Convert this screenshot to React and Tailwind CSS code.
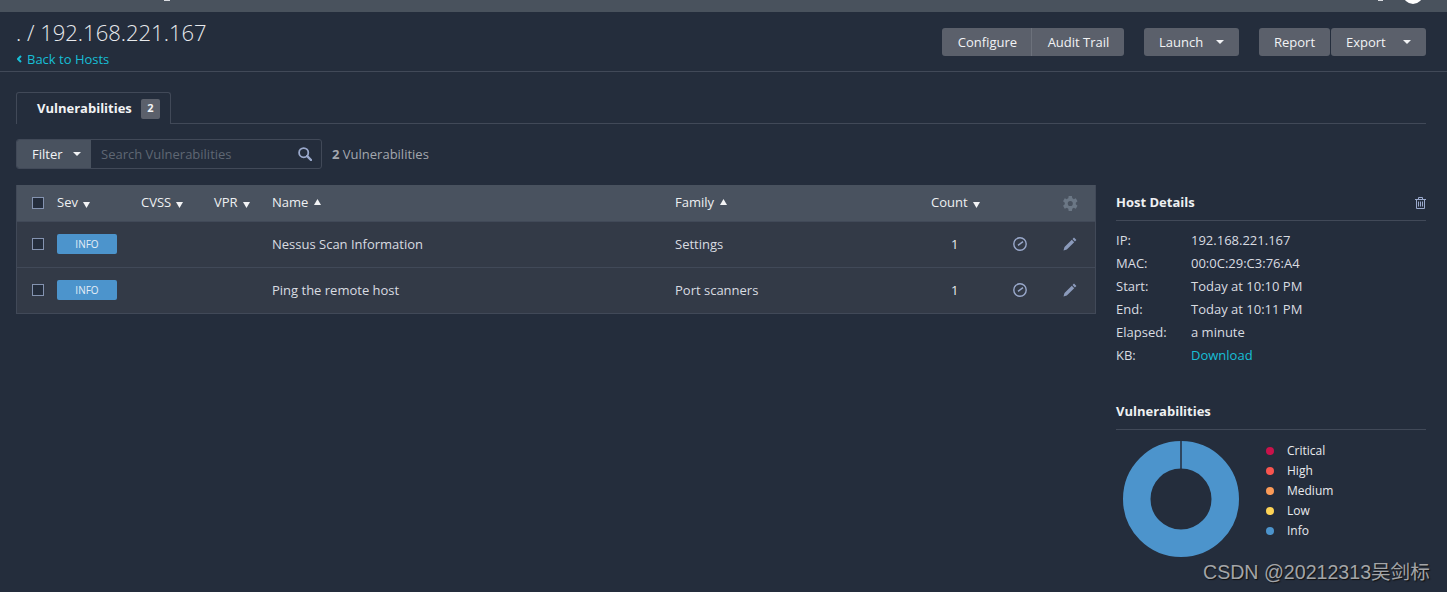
const Caret = ({ className = "" }) => (
  <svg viewBox="0 0 8 4" className={"h-1 w-2 fill-[#f2f3f5] " + className}>
    <path d="M0 0h8L4 4z" />
  </svg>
);

const SortArrow = ({ up }) => (
  <svg
    viewBox="0 0 7 7"
    className={"h-[7px] w-[7px] fill-[#f2f3f5] " + (up ? "ml-[6px] -mt-[2px]" : "ml-[5px] mt-[3px]")}
  >
    <path d={up ? "M3.5 0L7 6H0z" : "M0 1h7L3.5 7z"} />
  </svg>
);

const Check = ({ className = "" }) => (
  <span className={"block h-3 w-3 border border-[#8493b0] bg-[#242d3c] " + className} />
);

const SearchIcon = () => (
  <svg viewBox="0 0 14 14" className="h-[14px] w-[14px] fill-none stroke-[#9aa9cc]">
    <circle cx="5.7" cy="5.7" r="4.6" strokeWidth="1.8" />
    <path d="M9.2 9.2l3.8 3.8" strokeWidth="2.4" strokeLinecap="round" />
  </svg>
);

const Gauge = () => (
  <svg viewBox="0 0 14 14" className="h-[14px] w-[14px] fill-none stroke-[#9aa9cc]">
    <circle cx="7" cy="7" r="6.2" strokeWidth="1.4" />
    <path d="M5 8.4L10 4.6" strokeWidth="1.4" />
  </svg>
);

const Pencil = () => (
  <svg viewBox="0 0 14 14" className="h-[14px] w-[14px] fill-[#8b9abb]">
    <path d="M11 .6l2.4 2.4-1.5 1.5-2.4-2.4zM8.8 2.8l2.4 2.4-7.4 7.2-3.3 1 1-3.3z" />
  </svg>
);

const Gear = () => (
  <svg viewBox="0 0 24 24" className="h-[17px] w-[17px] fill-[#6b7785]">
    <path d="M19.4 13.2c.05-.4.1-.8.1-1.2s-.05-.8-.1-1.2l2.5-2-2.4-4.1-3 1.2a8 8 0 0 0-2-1.2L14 1.5H9.4l-.5 3.2a8 8 0 0 0-2 1.2l-3-1.2-2.4 4.1 2.5 2c-.05.4-.1.8-.1 1.2s.05.8.1 1.2l-2.5 2 2.4 4.1 3-1.2a8 8 0 0 0 2 1.2l.5 3.2H14l.5-3.2a8 8 0 0 0 2-1.2l3 1.2 2.4-4.1zM11.7 15.6a3.6 3.6 0 1 1 0-7.2 3.6 3.6 0 0 1 0 7.2z" />
  </svg>
);

const TrashIcon = () => (
  <svg viewBox="0 0 11 12" className="h-3 w-[11px] fill-none stroke-[#9aa9cc]">
    <path d="M0 2.5h11M3.5 2.5V.5h4v2M1.5 2.5v9h8v-9M3.5 4.5v5M5.5 4.5v5M7.5 4.5v5" strokeWidth="1" />
  </svg>
);

const Btn = ({ children, className = "" }) => (
  <div className={"flex h-7 items-center bg-[#5b606b] pt-[2px] text-[13px] text-[#f2f3f5] " + className}>
    {children}
  </div>
);

const rows = [
  { name: "Nessus Scan Information", family: "Settings" },
  { name: "Ping the remote host", family: "Port scanners" },
];

const details = [
  ["IP:", "192.168.221.167"],
  ["MAC:", "00:0C:29:C3:76:A4"],
  ["Start:", "Today at 10:10 PM"],
  ["End:", "Today at 10:11 PM"],
  ["Elapsed:", "a minute"],
];

const legend = [
  ["Critical", "bg-[#c9124a]"],
  ["High", "bg-[#f9554f]"],
  ["Medium", "bg-[#fb9b58]"],
  ["Low", "bg-[#fdd356]"],
  ["Info", "bg-[#4c94cc]"],
];

export default function App() {
  return (
    <div className="relative h-[592px] w-[1447px] overflow-hidden bg-[#242d3c] font-['Open_Sans',sans-serif] text-[13px] text-[#d9dce1]">
      <div className="relative h-3 bg-[#49525d]">
        <div className="absolute right-[24px] top-[-16px] h-5 w-5 rounded-full bg-white" />
        <div className="absolute left-[164px] top-0 h-[1px] w-[6px] bg-[#d9dce1]" />
        <div className="absolute left-[1378px] top-0 h-[1px] w-[5px] bg-[#d9dce1]" />
      </div>

      <header className="flex h-[60px] items-start justify-between border-b border-[#414958] pl-4 pr-[21px]">
        <div>
          <h1 className="mt-[6px] text-[22px] font-light leading-7 text-[#e8eaed]">. / 192.168.221.167</h1>
          <a className="mt-[4px] flex items-center text-[13px] leading-[18px] text-[#17bfd6]">
            <svg viewBox="0 0 5 8" className="ml-px mr-[5px] h-2 w-[5px] fill-none stroke-[#17bfd6] stroke-2">
              <path d="M4 1L1 4l3 3" />
            </svg>
            Back to Hosts
          </a>
        </div>
        <div className="mt-4 flex">
          <Btn className="w-[90px] justify-center rounded-l-[3px] border-r border-[#6c717b] pl-[2px]">Configure</Btn>
          <Btn className="w-[92px] justify-center rounded-r-[3px] pl-px">Audit Trail</Btn>
          <Btn className="ml-5 w-[95px] gap-[13px] rounded-[3px] pl-[15px]">
            Launch
            <Caret className="mb-[3px]" />
          </Btn>
          <Btn className="ml-5 w-[71px] justify-center rounded-[3px]">Report</Btn>
          <Btn className="ml-px w-[95px] gap-[17px] rounded-[3px] pl-[15px]">
            Export
            <Caret className="mb-[3px]" />
          </Btn>
        </div>
      </header>

      <div className="pl-4 pr-[21px]">
        <div className="mt-5 flex h-8 border-b border-[#414958]">
          <div className="-mb-px flex h-8 w-[155px] items-center rounded-t-[3px] border border-b-0 border-[#414958] bg-[#242d3c] pl-5">
            <span className="font-bold text-[#f2f3f5]">Vulnerabilities</span>
            <span className="ml-[9px] flex h-5 w-[19px] items-center justify-center rounded-[2px] bg-[#5b606b] text-[11px] font-bold text-[#f2f3f5]">
              2
            </span>
          </div>
        </div>

        <div className="mt-[15px] flex items-center">
          <div className="flex h-[30px] w-[306px] overflow-hidden rounded-[3px] border border-[#414958]">
            <div className="flex w-[74px] items-center bg-[#49525f] pl-[15px] pt-[2px] text-[#f2f3f5]">
              Filter
              <Caret className="ml-[10px] mb-[2px]" />
            </div>
            <div className="flex flex-1 items-center justify-between pl-[10px] pr-[9px] pt-[2px] text-[#5f6773]">
              Search Vulnerabilities
              <span className="mb-[2px]"><SearchIcon /></span>
            </div>
          </div>
          <div className="ml-[10px] pt-[2px] text-[#a3a7ae]">
            <span className="font-bold">2</span> Vulnerabilities
          </div>
        </div>

        <div className="mt-[16px] flex items-start">
          <div className="w-[1080px] border border-t-0 border-[#414958] bg-[#333a47]">
            <div className="flex h-[37px] items-center border-b border-[#414958] bg-[#49525f] pl-[15px] text-[#eef0f2]">
              <Check />
              <div className="ml-[13px] flex w-[84px] items-center">Sev<SortArrow /></div>
              <div className="flex w-[73px] items-center">CVSS<SortArrow /></div>
              <div className="flex w-[58px] items-center">VPR<SortArrow /></div>
              <div className="flex w-[403px] items-center">Name<SortArrow up /></div>
              <div className="flex w-[256px] items-center">Family<SortArrow up /></div>
              <div className="flex w-[131px] items-center">Count<SortArrow /></div>
              <Gear />
            </div>
            {rows.map((r, i) => (
              <div
                key={r.name}
                className={"flex items-center pl-[15px] " + (i === 0 ? "h-[46px] border-b border-[#414958]" : "h-[45px]")}
              >
                <Check className="mb-px" />
                <div className="ml-[13px] mb-px w-[215px]">
                  <span className="flex h-5 w-[60px] items-center justify-center rounded-[2px] bg-[#4c94cc] text-[10px] text-[#e4eef7]">
                    INFO
                  </span>
                </div>
                <div className="w-[403px]">{r.name}</div>
                <div className="w-[256px]">{r.family}</div>
                <div className="w-[82px] pl-[20px] text-[#e8eaed]">1</div>
                <div className="w-[50px] mb-px"><Gauge /></div>
                <span className="mb-px"><Pencil /></span>
              </div>
            ))}
          </div>

          <aside className="ml-5 w-[310px]">
            <div className="flex h-9 items-center justify-between border-b border-[#414958]">
              <span className="font-bold text-[#eef0f2]">Host Details</span>
              <TrashIcon />
            </div>
            <div className="mt-[8px]">
              {details.map(([k, v]) => (
                <div key={k} className="flex h-[23px] items-center">
                  <span className="w-[75px]">{k}</span>
                  <span>{v}</span>
                </div>
              ))}
              <div className="flex h-[23px] items-center">
                <span className="w-[75px]">KB:</span>
                <a className="text-[#17bfd6]">Download</a>
              </div>
            </div>

            <div className="mt-[27px] flex h-9 items-center border-b border-[#414958]">
              <span className="font-bold text-[#eef0f2]">Vulnerabilities</span>
            </div>
            <div className="mt-[11px] flex items-start pl-[7px]">
              <svg viewBox="0 0 116 116" className="h-[116px] w-[116px]">
                <circle cx="58" cy="58" r="44.25" fill="none" stroke="#4c94cc" strokeWidth="27.5" />
                <path d="M58 0v28" stroke="#242d3c" strokeWidth="1.5" />
              </svg>
              <div className="ml-[27px]">
                {legend.map(([label, color]) => (
                  <div key={label} className="flex h-5 items-center text-xs text-[#e8eaed]">
                    <span className={"h-2 w-2 rounded-full " + color} />
                    <span className="ml-[13px]">{label}</span>
                  </div>
                ))}
              </div>
            </div>
          </aside>
        </div>
      </div>

      <div className="absolute left-[1203px] top-[560px] font-['Liberation_Sans','Noto_Sans_CJK_SC',sans-serif] text-[19.6px] leading-6 text-[#a3a5a8] [text-shadow:1px_1px_1px_#111]">
        CSDN @20212313吴剑标
      </div>
    </div>
  );
}
